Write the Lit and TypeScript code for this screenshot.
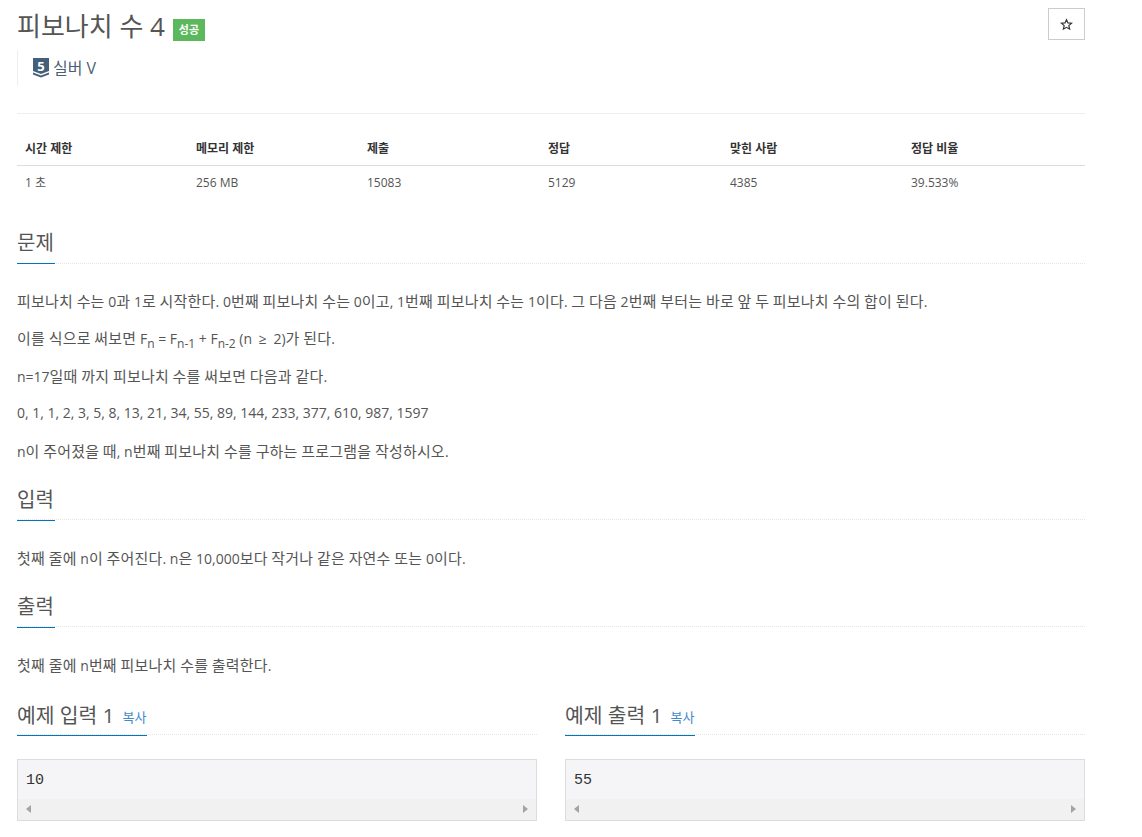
import { LitElement, html, css } from "lit";
import { customElement } from "lit/decorators.js";

const k = (text: string) =>
  text.split(/([가-힣]+)/).map((part, i) => (i % 2 ? html`<span class="k">${part}</span>` : part));

@customElement("app-root")
export class AppRoot extends LitElement {
  static styles = css`
    :host { display: block; background: #fff; min-height: 837px; color: #555; font-family: "Open Sans", "Noto Sans CJK KR", sans-serif; font-size: 14px; line-height: 22.4px; box-sizing: border-box; padding: 0 57px 0 17px; overflow: hidden; height: 837px; }
    .k { font-size: 1.07em; letter-spacing: .015em; }
    .head { display: flex; justify-content: space-between; align-items: flex-start; padding-top: 8px; height: 42px; box-sizing: border-box; }
    h1 { margin: 0; font-size: 26px; line-height: 36px; font-weight: 400; display: flex; align-items: center; height: 36px; color: #555; }
    .badge { background: #5cb85c; color: #fff; font-size: 11px; font-weight: 700; line-height: 22px; height: 22px; width: 32px; text-align: center; margin: 7px 0 0 8px; }
    .star { width: 37px; height: 32px; border: 1px solid #ccc; box-sizing: border-box; display: flex; align-items: center; justify-content: center; }
    .tier { margin-top: 8px; height: 36px; border-left: 1px solid #eee; padding-left: 15px; display: flex; align-items: center; gap: 4px; font-size: 16px; color: #4a5f75; }
    .rule { height: 1px; background: #eee; margin-top: 27px; }
    .tbl { margin-top: 17px; font-size: 12px; }
    .row { display: grid; grid-template-columns: 171px 171px 181px 182px 181px 182px; padding-left: 8px; }
    .row.th { font-weight: 700; color: #333; height: 35px; line-height: 35px; border-bottom: 1px solid #ddd; box-sizing: border-box; }
    .row.td { height: 33px; line-height: 34px; color: #555; }
    .sec { margin-top: 20px; }
    .sec.first { margin-top: 26px; }
    .ht { height: 38px; border-bottom: 1px dotted #e5e5e5; box-sizing: border-box; display: flex; align-items: flex-start; }
    .first .ht { height: 39px; }
    .ht h2 { margin: 0; font-size: 20px; font-weight: 400; line-height: 30px; height: 39px; flex: none; box-sizing: border-box; border-bottom: 1px solid #0076c0; color: #555; min-width: 38px; padding-top: 3px; white-space: nowrap; }
    .body { margin-top: 27px; }
    .first .body { margin-top: 26px; }
    p { margin: 0 0 15px; height: 22.4px; white-space: nowrap; }
    sub { font-size: 12px; line-height: 0; vertical-align: baseline; position: relative; bottom: -4px; color: #555; }
    .ge { margin: 0 3px; }
    .samples { display: grid; grid-template-columns: 520px 520px; gap: 28px; margin-top: 20px; }
    .samples h2 { width: 130px; font-size: 20.4px; }
    .copy { font-size: 13px; color: #428bca; margin-left: 3px; vertical-align: 1px; }
    pre { margin: 24px 0 0; height: 62px; border: 1px solid #ddd; background: #f5f5f7; box-sizing: border-box; font-family: "Liberation Mono", "DejaVu Sans Mono", monospace; font-size: 15px; color: #333; display: flex; flex-direction: column; }
    .code { flex: 1; padding: 10px 8px 0; line-height: 22px; }
    .bar { height: 21px; background: #f1f1f1; display: flex; justify-content: space-between; align-items: center; padding: 0 8px; }
    .al { width: 0; height: 0; border: 4.5px solid transparent; border-left: 0; border-right: 5px solid #a3a3a3; }
    .ar { width: 0; height: 0; border: 4.5px solid transparent; border-right: 0; border-left: 5px solid #a3a3a3; }
  `;

  sample(title: string, value: string) {
    return html`<div>
      <div class="ht"><h2>${title} <span class="copy">복사</span></h2></div>
      <pre><div class="code">${value}</div><div class="bar"><span class="al"></span><span class="ar"></span></div></pre>
    </div>`;
  }

  render() {
    return html`
      <div class="head">
        <h1>피보나치 수 4<span class="badge">성공</span></h1>
        <div class="star">
          <svg width="13" height="13" viewBox="0 0 24 24" fill="none" stroke="#333" stroke-width="2.2"><path d="M12 3l2.7 6 6.6.7-5 4.4 1.5 6.5L12 17.2 6.2 20.6l1.5-6.5-5-4.4 6.6-.7z"/></svg>
        </div>
      </div>
      <div class="tier">
        <svg width="16" height="20" viewBox="0 0 16 20"><path d="M0 0h16v13l-8 3-8-3z" fill="#435f7a"/><path d="M0 14.5l8 3 8-3v2l-8 3-8-3z" fill="#435f7a"/><text x="8" y="12.5" text-anchor="middle" font-family="Open Sans" font-weight="700" font-size="13" fill="#fff">5</text></svg>
        <span>실버 V</span>
      </div>
      <div class="rule"></div>
      <div class="tbl">
        <div class="row th"><span>시간 제한</span><span>메모리 제한</span><span>제출</span><span>정답</span><span>맞힌 사람</span><span>정답 비율</span></div>
        <div class="row td"><span>1 초</span><span>256 MB</span><span>15083</span><span>5129</span><span>4385</span><span>39.533%</span></div>
      </div>
      <div class="sec first">
        <div class="ht"><h2>문제</h2></div>
        <div class="body">
          <p>${k("피보나치 수는 0과 1로 시작한다. 0번째 피보나치 수는 0이고, 1번째 피보나치 수는 1이다. 그 다음 2번째 부터는 바로 앞 두 피보나치 수의 합이 된다.")}</p>
          <p>${k("이를 식으로 써보면 F")}<sub>n</sub> = F<sub>n-1</sub> + F<sub>n-2</sub> (n <span class="ge">≥</span> 2)${k("가 된다.")}</p>
          <p>${k("n=17일때 까지 피보나치 수를 써보면 다음과 같다.")}</p>
          <p>0, 1, 1, 2, 3, 5, 8, 13, 21, 34, 55, 89, 144, 233, 377, 610, 987, 1597</p>
          <p>${k("n이 주어졌을 때, n번째 피보나치 수를 구하는 프로그램을 작성하시오.")}</p>
        </div>
      </div>
      <div class="sec">
        <div class="ht"><h2>입력</h2></div>
        <div class="body"><p>${k("첫째 줄에 n이 주어진다. n은 10,000보다 작거나 같은 자연수 또는 0이다.")}</p></div>
      </div>
      <div class="sec">
        <div class="ht"><h2>출력</h2></div>
        <div class="body"><p>${k("첫째 줄에 n번째 피보나치 수를 출력한다.")}</p></div>
      </div>
      <div class="samples">
        ${this.sample("예제 입력 1", "10")}
        ${this.sample("예제 출력 1", "55")}
      </div>
    `;
  }
}
